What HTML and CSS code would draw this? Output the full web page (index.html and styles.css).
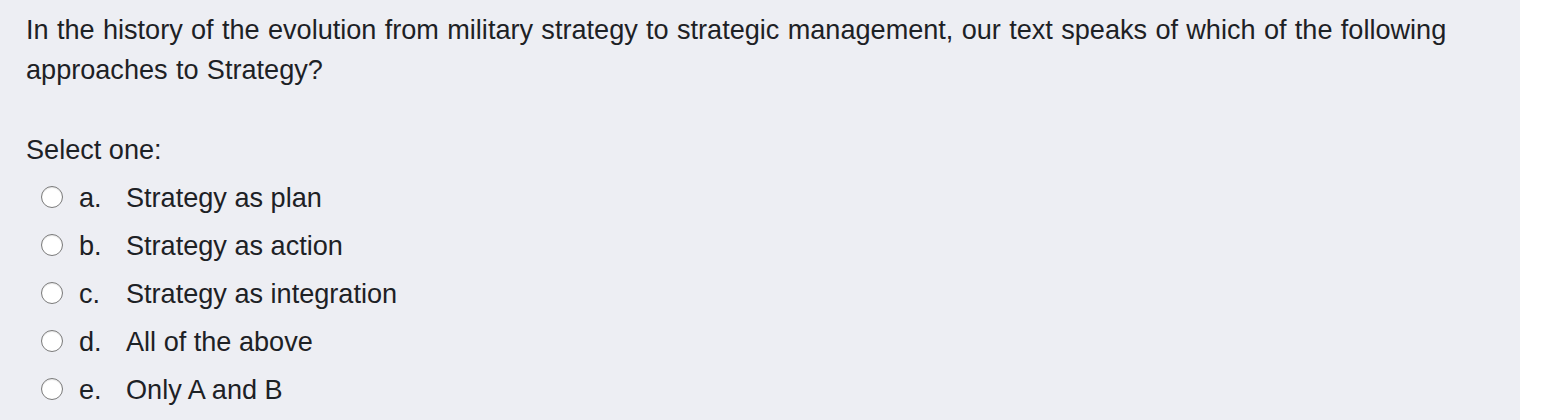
FILE: index.html
```html
<!DOCTYPE html>
<html>
<head>
<meta charset="utf-8">
<link rel="stylesheet" href="styles.css">
</head>
<body>
<div class="panel">
  <div class="qtext">In the history of the evolution from military strategy to strategic management, our text speaks of which of the following approaches to Strategy?</div>
  <div class="ablock">
    <div class="prompt">Select one:</div>
    <div class="answers">
      <div class="opt"><span class="radio"></span><span class="letter">a.</span><span class="label">Strategy as plan</span></div>
      <div class="opt"><span class="radio"></span><span class="letter">b.</span><span class="label">Strategy as action</span></div>
      <div class="opt"><span class="radio"></span><span class="letter">c.</span><span class="label">Strategy as integration</span></div>
      <div class="opt"><span class="radio"></span><span class="letter">d.</span><span class="label">All of the above</span></div>
      <div class="opt"><span class="radio"></span><span class="letter">e.</span><span class="label">Only A and B</span></div>
    </div>
  </div>
</div>
</body>
</html>
```
FILE: styles.css
```css
html, body {
  margin: 0;
  padding: 0;
  background: #ffffff;
}
body {
  font-family: "Liberation Sans", Arial, sans-serif;
  font-size: 27.1px;
  color: #1d2125;
}
.panel {
  width: 1520px;
  height: 420px;
  box-sizing: border-box;
  background: #edeef3;
  padding: 10px 0 0 26px;
}
.qtext {
  line-height: 40px;
  width: 1460px;
  word-spacing: 0.8px;
}
.ablock {
  margin-top: 40px;
}
.prompt {
  line-height: 40px;
}
.answers {
  margin-top: 4px;
  padding-left: 15px;
}
.opt {
  display: flex;
  align-items: center;
  height: 48px;
}
.radio {
  width: 20px;
  height: 20px;
  margin-top: -2px;
  border: 1px solid #7a7a7a;
  border-radius: 50%;
  background: #ffffff;
  box-shadow: inset 0 1px 1px rgba(0,0,0,0.1);
  flex: none;
}
.letter {
  margin-left: 16px;
  width: 47px;
}
```
